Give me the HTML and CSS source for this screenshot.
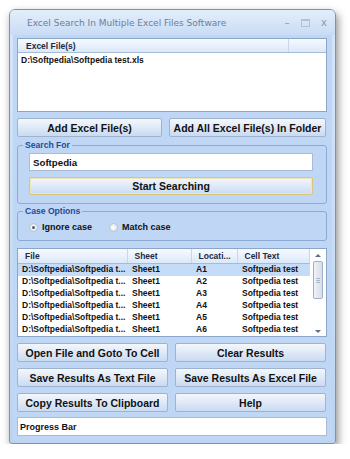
FILE: index.html
```html
<!DOCTYPE html>
<html lang="en">
<head>
    <meta charset="UTF-8">
    <meta name="viewport" content="width=device-width, initial-scale=1.0">
    <title>Excel Search In Multiple Excel Files Software</title>
    <link rel="stylesheet" href="styles.css">
</head>
<body>
    <div class="window">
        <div class="titlebar">
            <span class="title">Excel Search In Multiple Excel Files Software</span>
            <div class="controls">
                <span class="ctl">&#8211;</span>
                <span class="ctl max"></span>
                <span class="ctl">x</span>
            </div>
        </div>

        <div class="client">
            <div class="filelist">
                <div class="listhead">
                    <span class="col-files">Excel File(s)</span>
                    <span class="col-rest"></span>
                </div>
                <div class="listrow">D:\Softpedia\Softpedia test.xls</div>
            </div>

            <div class="btnrow">
                <button class="btn">Add Excel File(s)</button>
                <button class="btn">Add All Excel File(s) In Folder</button>
            </div>

            <fieldset class="group search">
                <legend>Search For</legend>
                <input type="text" class="textbox" value="Softpedia">
                <button class="btn start">Start Searching</button>
            </fieldset>

            <fieldset class="group cases">
                <legend>Case Options</legend>
                <label class="radio"><span class="dot on"></span>Ignore case</label>
                <label class="radio"><span class="dot"></span>Match case</label>
            </fieldset>

            <div class="results">
                <table class="grid">
                    <thead>
                        <tr>
                            <th class="c-file">File</th>
                            <th class="c-sheet">Sheet</th>
                            <th class="c-loc">Locati...</th>
                            <th class="c-text">Cell Text</th>
                        </tr>
                    </thead>
                    <tbody>
                        <tr class="sel"><td>D:\Softpedia\Softpedia t...</td><td>Sheet1</td><td>A1</td><td>Softpedia test</td></tr>
                        <tr><td>D:\Softpedia\Softpedia t...</td><td>Sheet1</td><td>A2</td><td>Softpedia test</td></tr>
                        <tr><td>D:\Softpedia\Softpedia t...</td><td>Sheet1</td><td>A3</td><td>Softpedia test</td></tr>
                        <tr><td>D:\Softpedia\Softpedia t...</td><td>Sheet1</td><td>A4</td><td>Softpedia test</td></tr>
                        <tr><td>D:\Softpedia\Softpedia t...</td><td>Sheet1</td><td>A5</td><td>Softpedia test</td></tr>
                        <tr><td>D:\Softpedia\Softpedia t...</td><td>Sheet1</td><td>A6</td><td>Softpedia test</td></tr>
                    </tbody>
                </table>
                <div class="scrollbar">
                    <span class="arrow up"></span>
                    <span class="thumb"><i></i><i></i><i></i></span>
                    <span class="track"></span>
                    <span class="arrow down"></span>
                </div>
            </div>

            <div class="btngrid">
                <button class="btn">Open File and Goto To Cell</button>
                <button class="btn">Clear Results</button>
                <button class="btn">Save Results As Text File</button>
                <button class="btn">Save Results As Excel File</button>
                <button class="btn">Copy Results To Clipboard</button>
                <button class="btn">Help</button>
            </div>

            <div class="progress">Progress Bar</div>
        </div>
    </div>
</body>
</html>
```

FILE: styles.css
```css
body {
    margin: 0;
    background-color: #ffffff;
    font-family: "Liberation Sans", Arial, sans-serif;
}

.window {
    width: 327px;
    height: 435px;
    margin: 9px 0 0 9px;
    box-sizing: border-box;
    background: linear-gradient(#d6e6f9, #bcd4f2);
    border: 1px solid #7c94b4;
    border-radius: 6px 6px 3px 3px;
    box-shadow: 2px 4px 8px rgba(0, 0, 0, 0.45);
    display: flex;
    flex-direction: column;
}

.titlebar {
    height: 25px;
    display: flex;
    align-items: center;
    justify-content: space-between;
    padding: 0 6px 0 17px;
    border-radius: 5px 5px 0 0;
    background: linear-gradient(#e3eefb, #c9dcf5);
}

.title {
    font-family: "DejaVu Sans", sans-serif;
    font-size: 9px;
    color: #6b7f99;
}

.controls {
    display: flex;
    gap: 6px;
    align-items: center;
}

.ctl {
    font-family: "DejaVu Sans", sans-serif;
    font-size: 10px;
    color: #8a9cb4;
    width: 10px;
    text-align: center;
}

.ctl.max {
    height: 5px;
    width: 7px;
    margin: 0 3px;
    border: 1px solid #b3c1d3;
    border-top-width: 2px;
}

.client {
    flex: 1;
    margin: 0 3px 3px 3px;
    padding: 3px 5px 0 4px;
    background-color: #bfd6f5;
    display: flex;
    flex-direction: column;
}

.filelist {
    height: 74px;
    box-sizing: border-box;
    background: #ffffff;
    border: 1px solid #8aa6c9;
}

.listhead {
    display: flex;
    height: 13px;
    background: linear-gradient(#f7faff, #dbe8f8);
    border-bottom: 1px solid #a5bcd9;
    font-size: 8.5px;
    font-weight: bold;
    color: #1b2a44;
}

.col-files {
    width: 271px;
    padding: 2px 0 0 8px;
    box-sizing: border-box;
    border-right: 1px solid #c7d6ea;
}

.listrow {
    font-size: 8.5px;
    font-weight: bold;
    color: #111111;
    padding: 2px 0 0 3px;
}

.btn {
    height: 19px;
    padding: 0;
    font-family: "Liberation Sans", Arial, sans-serif;
    font-size: 10.5px;
    font-weight: bold;
    color: #111111;
    background: linear-gradient(#f4f7fc 0%, #dfe9f7 50%, #c9dbf2 100%);
    border: 1px solid #9fb3cf;
    border-radius: 2px;
}

.btnrow {
    display: grid;
    grid-template-columns: 145px 157px;
    gap: 7px;
    margin-top: 6px;
}

.group {
    margin: 0;
    padding: 0 13px 0 11px;
    border: 1px solid #8aabd6;
    border-radius: 3px;
}

.group legend {
    padding: 0 2px;
    margin-left: -6px;
    font-size: 8.6px;
    font-weight: bold;
    color: #1f4b93;
}

.search {
    margin-top: 3px;
    height: 64px;
    box-sizing: border-box;
    display: flex;
    flex-direction: column;
    gap: 6px;
    padding-top: 3px;
}

.textbox {
    height: 18px;
    box-sizing: border-box;
    margin: 0;
    padding: 0 0 0 3px;
    font-family: "Liberation Sans", Arial, sans-serif;
    font-size: 9.7px;
    font-weight: bold;
    color: #111111;
    border: 1px solid #a9bcd6;
    background: #ffffff;
    outline: none;
}

.btn.start {
    height: 18px;
    border: 1px solid #d8c77a;
    box-shadow: inset 0 0 0 1px #efe6b8;
}

.cases {
    margin-top: 2px;
    height: 35px;
    box-sizing: border-box;
    display: flex;
    align-items: center;
    gap: 17px;
    padding-top: 6px;
}

.radio {
    display: flex;
    align-items: center;
    gap: 4px;
    font-size: 9px;
    font-weight: bold;
    color: #111111;
}

.dot {
    width: 7px;
    height: 7px;
    border-radius: 50%;
    border: 1px solid #b5c4d6;
    background: radial-gradient(#ffffff, #d9e1ea);
    display: flex;
    align-items: center;
    justify-content: center;
}

.dot.on::after {
    content: "";
    width: 3px;
    height: 3px;
    border-radius: 50%;
    background: #4d5d72;
}

.results {
    margin-top: 7px;
    height: 89px;
    box-sizing: border-box;
    border: 1px solid #8aa6c9;
    background: #ffffff;
    display: flex;
}

.grid {
    width: 292px;
    border-collapse: collapse;
    table-layout: fixed;
    font-size: 8.5px;
    font-weight: bold;
    color: #111111;
}

.grid th {
    box-sizing: border-box;
    height: 14px;
    text-align: left;
    padding: 0 0 0 7px;
    background: linear-gradient(#f7faff, #dbe8f8);
    border-bottom: 1px solid #a5bcd9;
    border-right: 1px solid #c7d6ea;
    color: #1b2a44;
}

.c-file { width: 109px; }
.c-sheet { width: 64px; }
.c-loc { width: 46px; }

.grid td {
    height: 11.6px;
    line-height: 11.6px;
    padding: 0 0 0 5px;
    white-space: nowrap;
    overflow: hidden;
}

.grid td:first-child {
    padding-left: 4px;
}

.grid tr.sel td {
    background: #c5dcf9;
}

.scrollbar {
    flex: 1;
    display: flex;
    flex-direction: column;
    align-items: center;
    padding: 3px 0;
    background: #ffffff;
}

.arrow {
    width: 0;
    height: 0;
    border-left: 3px solid transparent;
    border-right: 3px solid transparent;
}

.arrow.up {
    border-bottom: 3px solid #5a6f8c;
    margin: 2px 0 4px;
}

.arrow.down {
    border-top: 3px solid #5a6f8c;
    margin-top: 2px;
}

.thumb {
    width: 8px;
    height: 36px;
    border: 1px solid #9fb0c6;
    border-radius: 2px;
    background: linear-gradient(90deg, #f0f3f7, #d6dee9);
    display: flex;
    flex-direction: column;
    align-items: center;
    justify-content: center;
    gap: 1px;
}

.thumb i {
    width: 4px;
    height: 1px;
    background: #a9b6c7;
}

.track {
    flex: 1;
}

.btngrid {
    display: grid;
    grid-template-columns: 151px 151px;
    grid-auto-rows: 19px;
    column-gap: 7px;
    row-gap: 6px;
    margin-top: 6px;
}

.progress {
    margin-top: 5px;
    height: 19px;
    box-sizing: border-box;
    background: #ffffff;
    border: 1px solid #a9bcd6;
    font-size: 9px;
    font-weight: bold;
    color: #111111;
    padding: 4px 0 0 2px;
}
```
